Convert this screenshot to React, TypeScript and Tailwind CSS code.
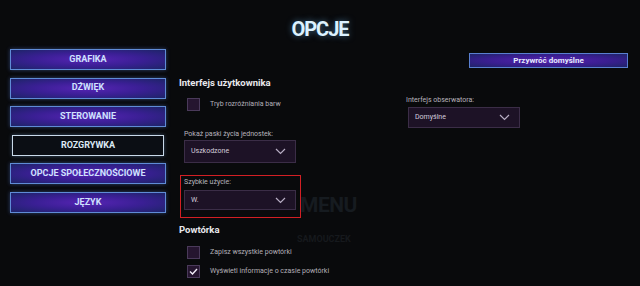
import React from "react";

const navItems = [
  "GRAFIKA",
  "DŹWIĘK",
  "STEROWANIE",
  "ROZGRYWKA",
  "OPCJE SPOŁECZNOŚCIOWE",
  "JĘZYK",
];

function Chevron() {
  return (
    <svg width="11" height="7" viewBox="0 0 11 7" className="shrink-0">
      <polyline points="1,1 5.5,5.5 10,1" fill="none" stroke="#b8aec4" strokeWidth="1.2" />
    </svg>
  );
}

function Dropdown({ value, h }: { value: string; h: string }) {
  return (
    <div
      className={`flex w-[112px] ${h} items-center justify-between border border-[#3b2d47] bg-[#1d1226] pl-[6px] pr-[9px] text-[7px] text-[#d4ccdc]`}
    >
      <span>{value}</span>
      <Chevron />
    </div>
  );
}

function Checkbox({ label, checked }: { label: string; checked?: boolean }) {
  return (
    <div className="flex items-center">
      <div className="ml-[8px] flex h-[13px] w-[13px] items-center justify-center border border-[#4a3a5a] bg-[#25152f]">
        {checked && (
          <svg width="9" height="7" viewBox="0 0 9 7">
            <polyline points="1,3.5 3.5,6 8,1" fill="none" stroke="#f2eef8" strokeWidth="1.4" />
          </svg>
        )}
      </div>
      <span className="ml-[10px] text-[7px] text-[#b4b0b8]">{label}</span>
    </div>
  );
}

export default function App() {
  return (
    <div className="relative h-[286px] w-[640px] overflow-hidden bg-[#090a0c] font-['Roboto',sans-serif]">
      {/* faint background menu */}
      <div className="pointer-events-none absolute left-[300px] top-[195px] text-[21px] font-bold leading-none tracking-[-0.5px] text-[#161b20]">
        MENU
      </div>
      <div className="pointer-events-none absolute left-[297px] top-[235px] text-[9px] font-bold leading-none text-[#16191d]">
        SAMOUCZEK
      </div>

      <div className="relative pt-[17px] text-center text-[20px] font-bold leading-[24px] tracking-[-1px] text-[#dcf2ff] [text-shadow:0_0_6px_rgba(120,200,255,0.5)]">
        OPCJE
      </div>

      <div className="relative mt-[8px] flex">
        <nav className="ml-[10px] flex w-[156px] flex-col gap-[7.6px]">
          {navItems.map((item) =>
            item === "ROZGRYWKA" ? (
              <div
                key={item}
                className="mx-[2px] flex h-[21px] items-center justify-center border border-[#c9d9e8] bg-[#0b0e14] text-[9px] font-bold text-[#dce8f4] shadow-[0_0_4px_rgba(120,170,230,0.4)]"
              >
                {item}
              </div>
            ) : (
              <div
                key={item}
                className="flex h-[21px] items-center justify-center border border-[#5f8bd6] bg-[radial-gradient(ellipse_at_center,#5624b4_0%,#3a1f94_50%,#1d2468_100%)] text-[9px] font-bold text-[#cfe2ff] shadow-[0_0_4px_rgba(90,130,230,0.45)]"
              >
                {item}
              </div>
            )
          )}
        </nav>

        <div className="ml-[13px] flex flex-1 flex-col">
          <div className="mt-[4px] flex justify-end pr-[12px]">
            <div className="flex h-[15px] w-[159px] items-center justify-center border border-[#5a7fd0] bg-[radial-gradient(ellipse_at_center,#5522b0_0%,#3a1e90_55%,#1e2468_100%)] text-[8px] font-bold text-[#e6ecff]">
              Przywróć domyślne
            </div>
          </div>

          <div className="mt-[9px] text-[9.5px] font-bold leading-[12px] text-[#e8e8ec]">
            Interfejs użytkownika
          </div>

          <div className="flex">
            <div className="flex w-[227px] flex-col">
              <div className="mt-[9px]">
                <Checkbox label="Tryb rozróżniania barw" />
              </div>
              <div className="ml-[5px] mt-[18px] text-[7px] leading-[10px] text-[#b8b4bc]">
                Pokaż paski życia jednostek:
              </div>
              <div className="ml-[5px] mt-[1px]">
                <Dropdown value="Uszkodzone" h="h-[23px]" />
              </div>
              <div className="ml-[1px] mt-[12px] w-[121px] border-[1.5px] border-[#d21f24] pb-[7px] pl-[3px] pt-[1px]">
                <div className="text-[7px] leading-[10px] text-[#b8b4bc]">Szybkie użycie:</div>
                <div className="mt-[3px]">
                  <Dropdown value="W." h="h-[20px]" />
                </div>
              </div>
              <div className="mt-[6px] text-[9.5px] font-bold leading-[12px] text-[#e8e8ec]">Powtórka</div>
              <div className="mt-[10px] flex flex-col gap-[6px]">
                <Checkbox label="Zapisz wszystkie powtórki" />
                <Checkbox label="Wyświetl informacje o czasie powtórki" checked />
              </div>
            </div>

            <div className="flex flex-col">
              <div className="mt-[6px] text-[7px] leading-[10px] text-[#b8b4bc]">Interfejs obserwatora:</div>
              <div className="ml-[2px] mt-[2px]">
                <Dropdown value="Domyślne" h="h-[21px]" />
              </div>
            </div>
          </div>
        </div>
      </div>
    </div>
  );
}
